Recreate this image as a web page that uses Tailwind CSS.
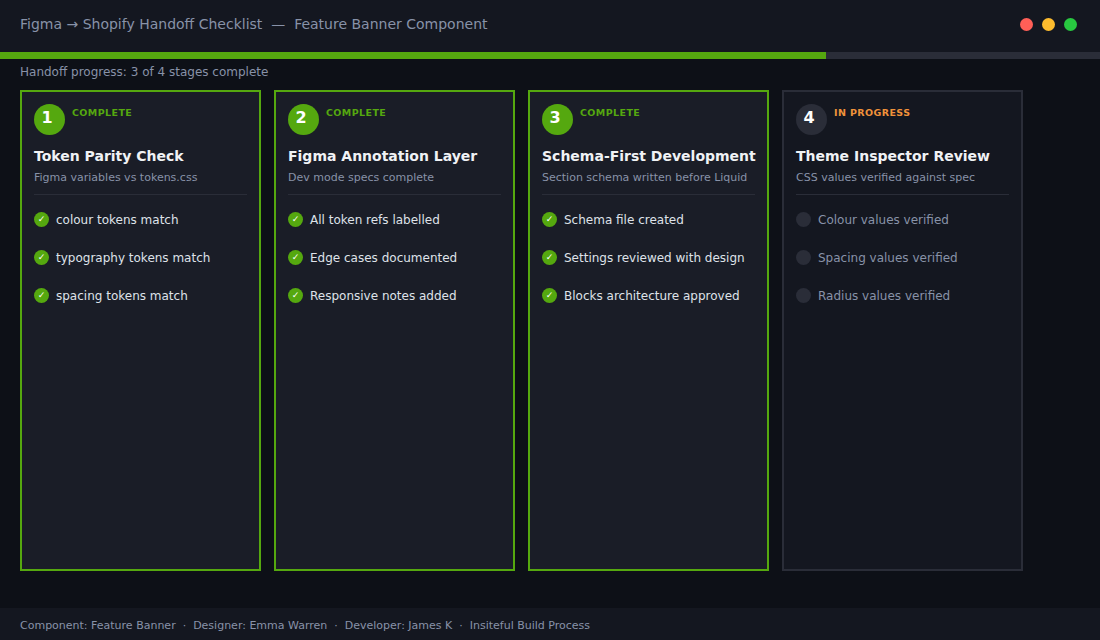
<!DOCTYPE html>
<html lang="en">
<head>
  <meta charset="UTF-8" />
  <title>Figma to Shopify Handoff Checklist</title>
  <script src="https://cdn.jsdelivr.net/npm/@tailwindcss/browser@4"></script>
</head>
<body class="w-[1100px] h-[640px] overflow-hidden bg-[#0d1017] font-['DejaVu_Sans',sans-serif] flex flex-col">
  <!-- Header -->
  <header class="h-[52px] shrink-0 bg-[#141720] pl-5 pr-[23px] pb-[3px] flex items-center justify-between">
    <h1 class="text-[14px] font-normal text-[#8892a8] whitespace-pre">Figma → Shopify Handoff Checklist  —  Feature Banner Component</h1>
    <div class="flex gap-[9px]">
      <span class="w-[13px] h-[13px] rounded-full bg-[#ff5f57]"></span>
      <span class="w-[13px] h-[13px] rounded-full bg-[#febc2e]"></span>
      <span class="w-[13px] h-[13px] rounded-full bg-[#28c840]"></span>
    </div>
  </header>

  <!-- Progress -->
  <div class="h-[7px] shrink-0 bg-[#2a2d38]">
    <div class="h-full bg-[#55a80f]" style="width: 75.1%"></div>
  </div>
  <p class="h-[31px] shrink-0 px-5 pt-[6px] text-[12px] leading-[14px] text-[#8892a8]">Handoff progress: 3 of 4 stages complete</p>

  <!-- Stage cards -->
  <main class="flex gap-[13px] px-5 h-[481px] shrink-0">
    <section class="w-[241px] border-2 border-[#55a80f] bg-[#1a1d27] px-3 pt-3">
      <div class="flex gap-[7px]">
        <div class="w-[31px] h-[31px] pr-[5px] rounded-full bg-[#55a80f] text-white font-bold text-[16px] leading-[28px] text-center">1</div>
        <span class="pt-[1px] text-[9.5px] leading-[16px] font-bold tracking-[0.4px] text-[#55a80f]">COMPLETE</span>
      </div>
      <h2 class="mt-[11px] text-[14px] leading-[20px] font-bold text-[#f0f2f5] whitespace-nowrap">Token Parity Check</h2>
      <p class="mt-[5px] text-[11px] leading-[14px] text-[#8892a8]">Figma variables vs tokens.css</p>
      <hr class="mt-[9px] border-[#2a2d38]" />
      <ul class="mt-[6px] flex flex-col">
        <li class="h-[38px] flex items-center gap-[7px] text-[12px] text-[#dfe2e9]"><span class="mb-[1px] w-[15px] h-[15px] rounded-full bg-[#55a80f] text-white text-[9px] leading-[14px] text-center">✓</span>colour tokens match</li>
        <li class="h-[38px] flex items-center gap-[7px] text-[12px] text-[#dfe2e9]"><span class="mb-[1px] w-[15px] h-[15px] rounded-full bg-[#55a80f] text-white text-[9px] leading-[14px] text-center">✓</span>typography tokens match</li>
        <li class="h-[38px] flex items-center gap-[7px] text-[12px] text-[#dfe2e9]"><span class="mb-[1px] w-[15px] h-[15px] rounded-full bg-[#55a80f] text-white text-[9px] leading-[14px] text-center">✓</span>spacing tokens match</li>
      </ul>
    </section>

    <section class="w-[241px] border-2 border-[#55a80f] bg-[#1a1d27] px-3 pt-3">
      <div class="flex gap-[7px]">
        <div class="w-[31px] h-[31px] pr-[5px] rounded-full bg-[#55a80f] text-white font-bold text-[16px] leading-[28px] text-center">2</div>
        <span class="pt-[1px] text-[9.5px] leading-[16px] font-bold tracking-[0.4px] text-[#55a80f]">COMPLETE</span>
      </div>
      <h2 class="mt-[11px] text-[14px] leading-[20px] font-bold text-[#f0f2f5] whitespace-nowrap">Figma Annotation Layer</h2>
      <p class="mt-[5px] text-[11px] leading-[14px] text-[#8892a8]">Dev mode specs complete</p>
      <hr class="mt-[9px] border-[#2a2d38]" />
      <ul class="mt-[6px] flex flex-col">
        <li class="h-[38px] flex items-center gap-[7px] text-[12px] text-[#dfe2e9]"><span class="mb-[1px] w-[15px] h-[15px] rounded-full bg-[#55a80f] text-white text-[9px] leading-[14px] text-center">✓</span>All token refs labelled</li>
        <li class="h-[38px] flex items-center gap-[7px] text-[12px] text-[#dfe2e9]"><span class="mb-[1px] w-[15px] h-[15px] rounded-full bg-[#55a80f] text-white text-[9px] leading-[14px] text-center">✓</span>Edge cases documented</li>
        <li class="h-[38px] flex items-center gap-[7px] text-[12px] text-[#dfe2e9]"><span class="mb-[1px] w-[15px] h-[15px] rounded-full bg-[#55a80f] text-white text-[9px] leading-[14px] text-center">✓</span>Responsive notes added</li>
      </ul>
    </section>

    <section class="w-[241px] border-2 border-[#55a80f] bg-[#1a1d27] px-3 pt-3">
      <div class="flex gap-[7px]">
        <div class="w-[31px] h-[31px] pr-[5px] rounded-full bg-[#55a80f] text-white font-bold text-[16px] leading-[28px] text-center">3</div>
        <span class="pt-[1px] text-[9.5px] leading-[16px] font-bold tracking-[0.4px] text-[#55a80f]">COMPLETE</span>
      </div>
      <h2 class="mt-[11px] text-[14px] leading-[20px] font-bold text-[#f0f2f5] whitespace-nowrap">Schema-First Development</h2>
      <p class="mt-[5px] text-[11px] leading-[14px] text-[#8892a8] whitespace-nowrap">Section schema written before Liquid</p>
      <hr class="mt-[9px] border-[#2a2d38]" />
      <ul class="mt-[6px] flex flex-col">
        <li class="h-[38px] flex items-center gap-[7px] text-[12px] text-[#dfe2e9]"><span class="mb-[1px] w-[15px] h-[15px] rounded-full bg-[#55a80f] text-white text-[9px] leading-[14px] text-center">✓</span>Schema file created</li>
        <li class="h-[38px] flex items-center gap-[7px] text-[12px] text-[#dfe2e9]"><span class="mb-[1px] w-[15px] h-[15px] rounded-full bg-[#55a80f] text-white text-[9px] leading-[14px] text-center">✓</span>Settings reviewed with design</li>
        <li class="h-[38px] flex items-center gap-[7px] text-[12px] text-[#dfe2e9]"><span class="mb-[1px] w-[15px] h-[15px] rounded-full bg-[#55a80f] text-white text-[9px] leading-[14px] text-center">✓</span>Blocks architecture approved</li>
      </ul>
    </section>

    <section class="w-[241px] border-2 border-[#2a2d38] bg-[#141720] px-3 pt-3">
      <div class="flex gap-[7px]">
        <div class="w-[31px] h-[31px] pr-[5px] rounded-full bg-[#2a2d38] text-white font-bold text-[16px] leading-[28px] text-center">4</div>
        <span class="pt-[1px] text-[9.5px] leading-[16px] font-bold tracking-[0.4px] text-[#f0923a]">IN PROGRESS</span>
      </div>
      <h2 class="mt-[11px] text-[14px] leading-[20px] font-bold text-[#f0f2f5] whitespace-nowrap">Theme Inspector Review</h2>
      <p class="mt-[5px] text-[11px] leading-[14px] text-[#8892a8]">CSS values verified against spec</p>
      <hr class="mt-[9px] border-[#2a2d38]" />
      <ul class="mt-[6px] flex flex-col">
        <li class="h-[38px] flex items-center gap-[7px] text-[12px] text-[#8892a8]"><span class="mb-[1px] w-[15px] h-[15px] rounded-full bg-[#2a2d38]"></span>Colour values verified</li>
        <li class="h-[38px] flex items-center gap-[7px] text-[12px] text-[#8892a8]"><span class="mb-[1px] w-[15px] h-[15px] rounded-full bg-[#2a2d38]"></span>Spacing values verified</li>
        <li class="h-[38px] flex items-center gap-[7px] text-[12px] text-[#8892a8]"><span class="mb-[1px] w-[15px] h-[15px] rounded-full bg-[#2a2d38]"></span>Radius values verified</li>
      </ul>
    </section>
  </main>

  <!-- Footer -->
  <footer class="mt-auto h-[32px] shrink-0 bg-[#141720] px-5 pt-[4px] flex items-center text-[11px] text-[#8892a8] whitespace-pre">Component: Feature Banner  ·  Designer: Emma Warren  ·  Developer: James K  ·  Insiteful Build Process</footer>
</body>
</html>
